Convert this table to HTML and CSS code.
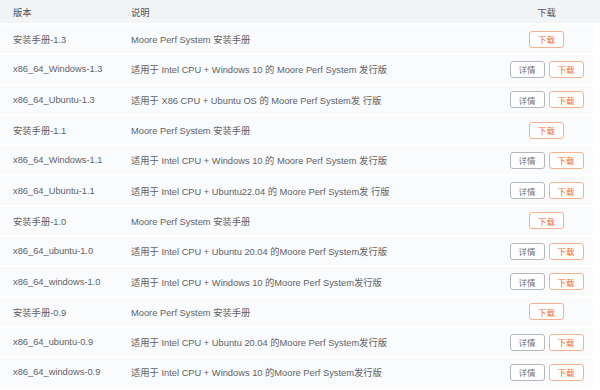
FILE: index.html
```html
<!DOCTYPE html>
<html lang="zh">
<head>
<meta charset="utf-8">
<link rel="stylesheet" href="styles.css">
</head>
<body>
<div class="table">
  <div class="head-wrap">
    <div class="row head">
      <div class="c1">版本</div>
      <div class="c2">说明</div>
      <div class="c3">下载</div>
    </div>
  </div>
  <div class="row"><div class="c1">安装手册-1.3</div><div class="c2">Moore Perf System 安装手册</div><div class="c3"><span class="btn dl">下载</span></div></div>
  <div class="row"><div class="c1">x86_64_Windows-1.3</div><div class="c2">适用于 Intel CPU + Windows 10 的 Moore Perf System 发行版</div><div class="c3"><span class="btn info">详情</span><span class="btn dl">下载</span></div></div>
  <div class="row"><div class="c1">x86_64_Ubuntu-1.3</div><div class="c2">适用于 X86 CPU + Ubuntu OS 的 Moore Perf System发 行版</div><div class="c3"><span class="btn info">详情</span><span class="btn dl">下载</span></div></div>
  <div class="row"><div class="c1">安装手册-1.1</div><div class="c2">Moore Perf System 安装手册</div><div class="c3"><span class="btn dl">下载</span></div></div>
  <div class="row"><div class="c1">x86_64_Windows-1.1</div><div class="c2">适用于 Intel CPU + Windows 10 的 Moore Perf System 发行版</div><div class="c3"><span class="btn info">详情</span><span class="btn dl">下载</span></div></div>
  <div class="row"><div class="c1">x86_64_Ubuntu-1.1</div><div class="c2">适用于 Intel CPU + Ubuntu22.04 的 Moore Perf System发 行版</div><div class="c3"><span class="btn info">详情</span><span class="btn dl">下载</span></div></div>
  <div class="row"><div class="c1">安装手册-1.0</div><div class="c2">Moore Perf System 安装手册</div><div class="c3"><span class="btn dl">下载</span></div></div>
  <div class="row"><div class="c1">x86_64_ubuntu-1.0</div><div class="c2">适用于 Intel CPU + Ubuntu 20.04 的Moore Perf System发行版</div><div class="c3"><span class="btn info">详情</span><span class="btn dl">下载</span></div></div>
  <div class="row"><div class="c1">x86_64_windows-1.0</div><div class="c2">适用于 Intel CPU + Windows 10 的Moore Perf System发行版</div><div class="c3"><span class="btn info">详情</span><span class="btn dl">下载</span></div></div>
  <div class="row"><div class="c1">安装手册-0.9</div><div class="c2">Moore Perf System 安装手册</div><div class="c3"><span class="btn dl">下载</span></div></div>
  <div class="row"><div class="c1">x86_64_ubuntu-0.9</div><div class="c2">适用于 Intel CPU + Ubuntu 20.04 的Moore Perf System发行版</div><div class="c3"><span class="btn info">详情</span><span class="btn dl">下载</span></div></div>
  <div class="row"><div class="c1">x86_64_windows-0.9</div><div class="c2">适用于 Intel CPU + Windows 10 的Moore Perf System发行版</div><div class="c3"><span class="btn info">详情</span><span class="btn dl">下载</span></div></div>
</div>
</body>
</html>
```
FILE: styles.css
```css
html, body {
  margin: 0;
  padding: 0;
  background: #ffffff;
}
body {
  font-family: "Liberation Sans", "Noto Sans CJK SC", sans-serif;
  font-size: 9.3px;
  color: #606266;
}
.table {
  display: flex;
  flex-direction: column;
  gap: 2px;
}
.head-wrap {
  background: #f3f4f6;
}
.row {
  width: 593px;
  height: 28.3px;
  display: grid;
  grid-template-columns: 118px 382px 1fr;
  align-items: center;
  background: #fafbfc;
}
.head-wrap .row {
  height: 23px;
  background: transparent;
  color: #505256;
}
.c1, .c2 {
  padding-left: 13px;
  white-space: nowrap;
}
.c3 {
  display: flex;
  justify-content: center;
  gap: 4px;
}
.btn {
  box-sizing: border-box;
  width: 35px;
  height: 17px;
  border-radius: 3px;
  display: flex;
  align-items: center;
  justify-content: center;
  font-size: 8.5px;
  background: #ffffff;
}
.dl {
  border: 1px solid #f6b08e;
  color: #f26a2e;
}
.info {
  border: 1px solid #b4b6ba;
  color: #707276;
}
```
